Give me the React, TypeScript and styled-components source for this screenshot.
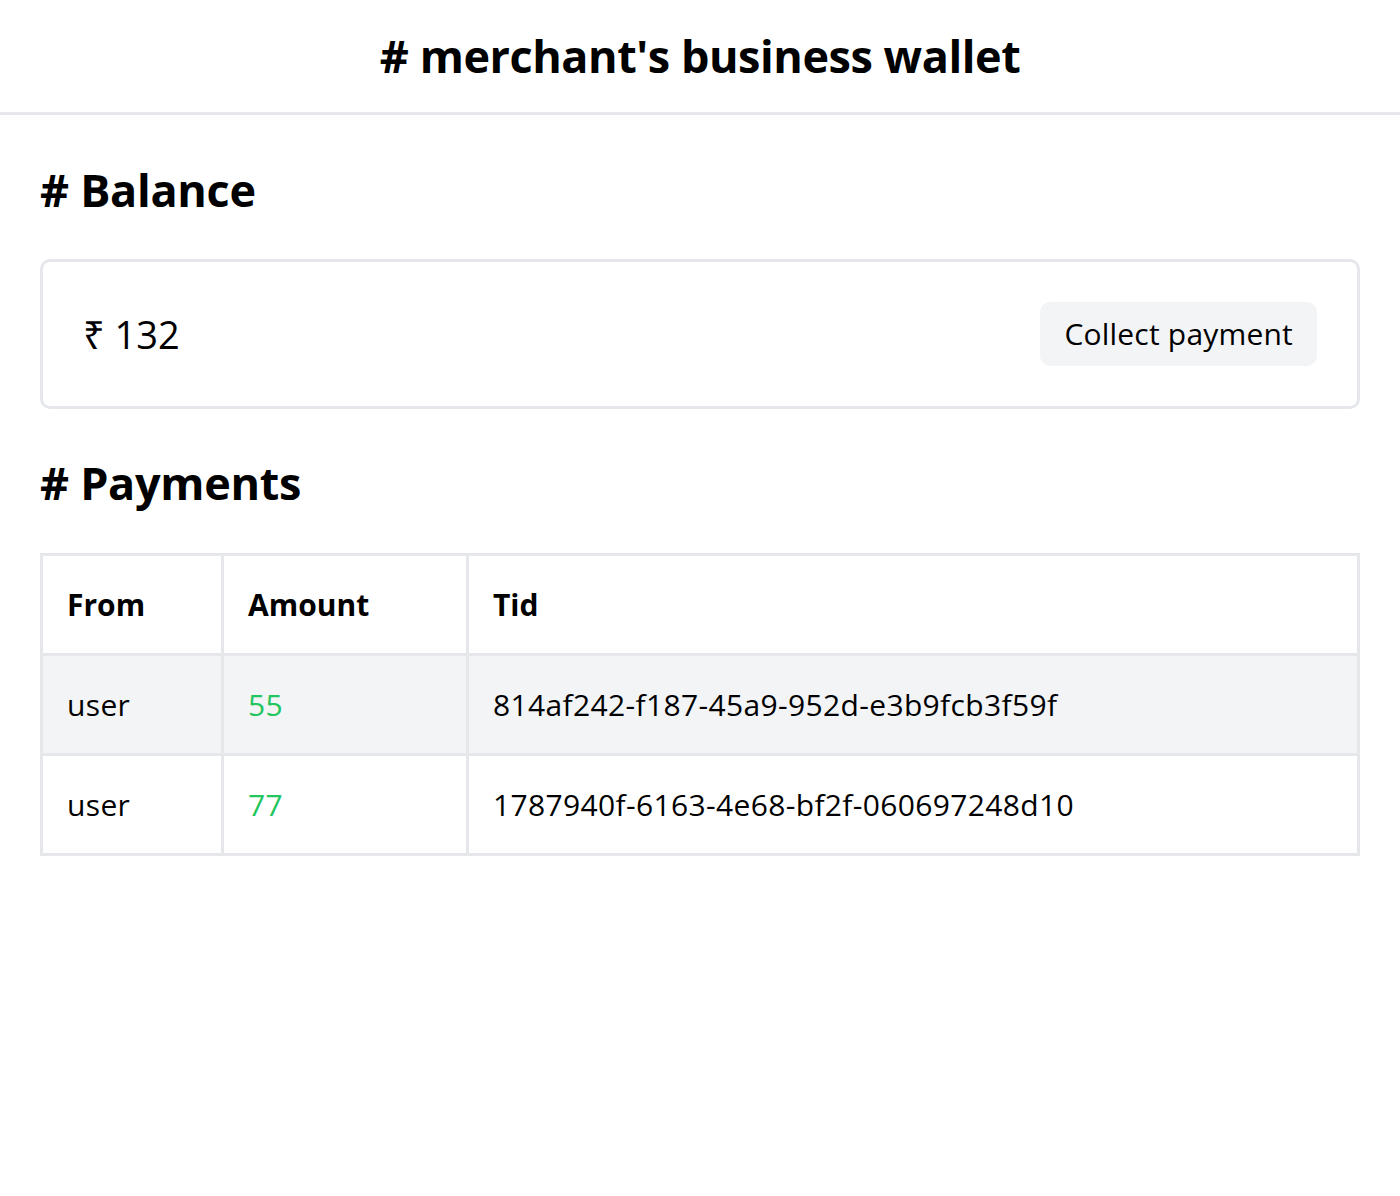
import React from "react";
import styled, { createGlobalStyle } from "styled-components";

const Global = createGlobalStyle`
  html, body { margin: 0; padding: 0; background: #ffffff; }
  body {
    font-family: "Open Sans", "Noto Sans", "Liberation Sans", sans-serif;
    color: #000000;
  }
  * { box-sizing: border-box; }
`;

const Header = styled.header`
  height: 115px;
  border-bottom: 3px solid #e5e7eb;
  display: flex;
  align-items: center;
  justify-content: center;
`;

const Title = styled.h1`
  margin: 0;
  font-size: 45px;
  line-height: 48px;
  font-weight: 700;
  letter-spacing: -0.45px;
`;

const Main = styled.main`
  padding: 45px 40px 0;
  display: flex;
  flex-direction: column;
`;

const Heading = styled.h2`
  margin: 0;
  font-size: 45px;
  line-height: 60px;
  font-weight: 700;
  letter-spacing: -0.3px;
`;

const Card = styled.section`
  margin-top: 39px;
  margin-bottom: 44px;
  border: 3px solid #e5e7eb;
  border-radius: 10px;
  padding: 40px 40px 40px 40px;
  display: flex;
  align-items: center;
  justify-content: space-between;
`;

const Amount = styled.div`
  font-size: 38px;
  line-height: 48px;
  font-weight: 400;
`;

const Button = styled.button`
  font-family: inherit;
  font-size: 30px;
  line-height: 40px;
  color: #000000;
  background: #f3f4f6;
  border: none;
  border-radius: 10px;
  padding: 12px 24px;
  letter-spacing: 0.2px;
  cursor: pointer;
`;

const Table = styled.table`
  margin-top: 40px;
  width: 100%;
  border-collapse: collapse;
  border: 3px solid #e5e7eb;
  table-layout: fixed;
`;

const Row = styled.tr<{ $shaded?: boolean }>`
  background: ${(p) => (p.$shaded ? "#f3f4f6" : "#ffffff")};
`;

const HeadCell = styled.th<{ $w?: number }>`
  ${(p) => (p.$w ? `width: ${p.$w}px;` : "")}
  border: 3px solid #e5e7eb;
  text-align: left;
  font-size: 30px;
  line-height: 36px;
  font-weight: 700;
  padding: 29px 24px 29px 24px;
  height: 100px;
`;

const Cell = styled.td<{ $green?: boolean }>`
  border: 3px solid #e5e7eb;
  font-size: 30px;
  line-height: 36px;
  padding: 29px 24px;
  height: 100px;
  letter-spacing: 0.35px;
  color: ${(p) => (p.$green ? "#22c55e" : "#000000")};
`;

const payments = [
  { from: "user", amount: 55, tid: "814af242-f187-45a9-952d-e3b9fcb3f59f" },
  { from: "user", amount: 77, tid: "1787940f-6163-4e68-bf2f-060697248d10" },
];

export default function App() {
  return (
    <>
      <Global />
      <Header>
        <Title># merchant's business wallet</Title>
      </Header>
      <Main>
        <Heading># Balance</Heading>
        <Card>
          <Amount>₹ 132</Amount>
          <Button>Collect payment</Button>
        </Card>
        <Heading># Payments</Heading>
        <Table>
          <thead>
            <tr>
              <HeadCell $w={181}>From</HeadCell>
              <HeadCell $w={245}>Amount</HeadCell>
              <HeadCell>Tid</HeadCell>
            </tr>
          </thead>
          <tbody>
            {payments.map((p, i) => (
              <Row key={p.tid} $shaded={i % 2 === 0}>
                <Cell>{p.from}</Cell>
                <Cell $green>{p.amount}</Cell>
                <Cell>{p.tid}</Cell>
              </Row>
            ))}
          </tbody>
        </Table>
      </Main>
    </>
  );
}
